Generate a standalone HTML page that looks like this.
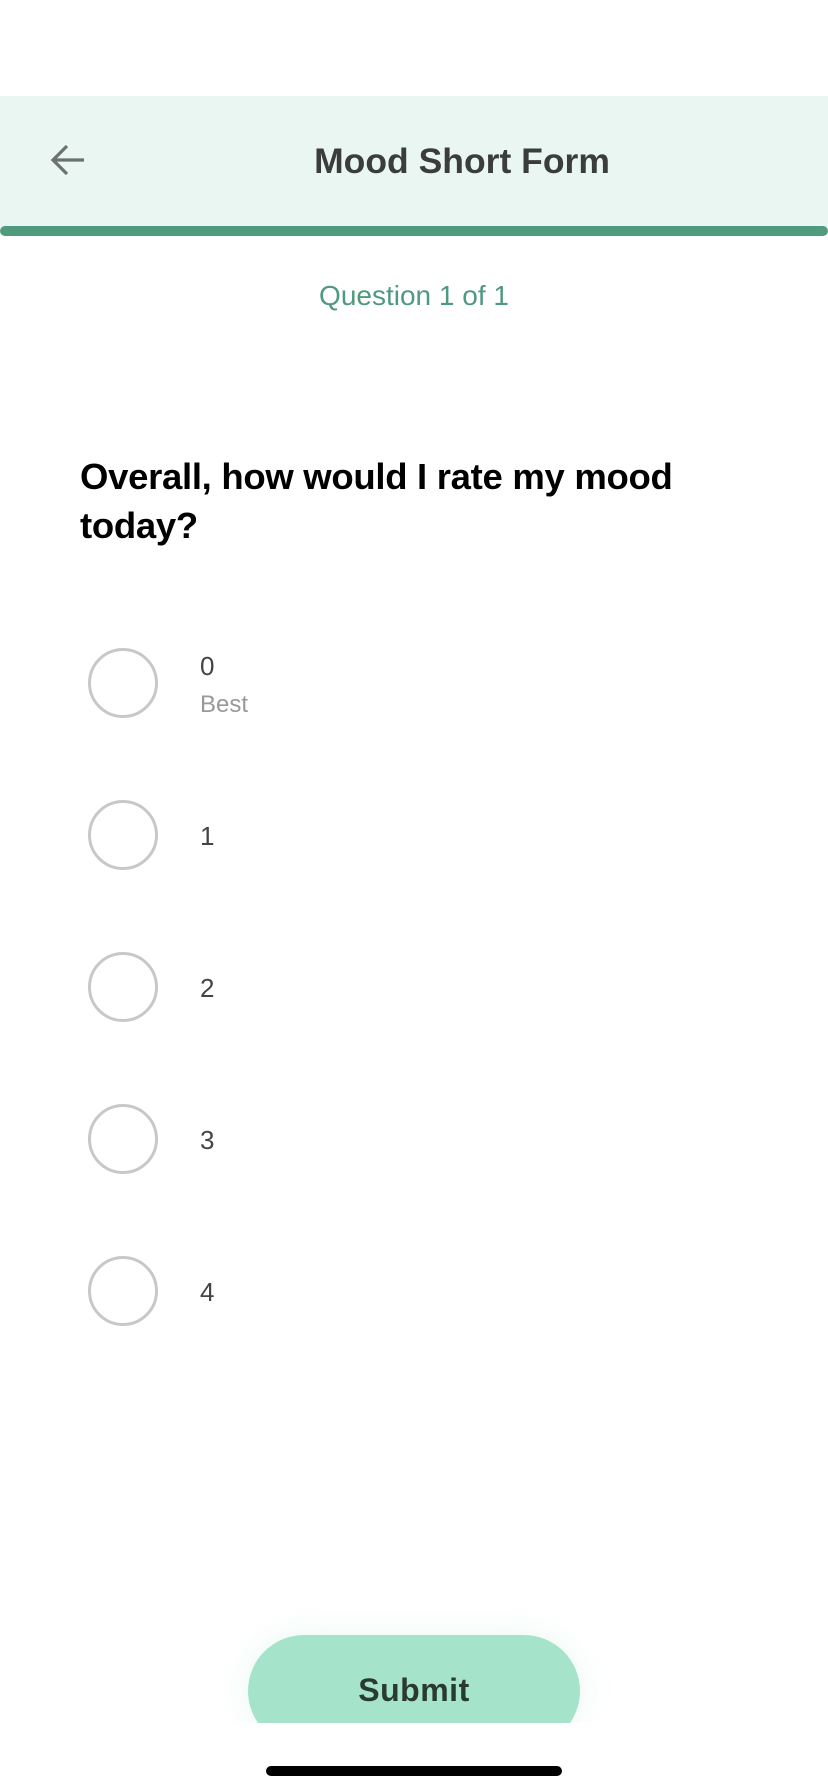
<!DOCTYPE html>
<html><head><meta charset="utf-8"><style>
*{margin:0;padding:0;box-sizing:border-box}
body{width:828px;height:1792px;background:#fff;position:relative;overflow:hidden;font-family:"Liberation Sans",Arial,sans-serif}
.hdr{position:absolute;left:0;top:96px;width:828px;height:132px;background:#e9f6f1}
.bar{position:absolute;left:0;top:226px;width:828px;height:10px;background:#509b7e;border-radius:5px}
.title{position:absolute;left:0;width:828px;top:140px;text-align:center;font-weight:bold;font-size:35.5px;color:#3a3d3b;padding-left:96px;line-height:42px}
.q{position:absolute;left:0;width:828px;top:279px;text-align:center;font-size:28px;color:#4f9a7e;line-height:34px;padding-left:0}
.qt{position:absolute;left:80px;top:452px;width:660px;font-weight:bold;font-size:36.5px;line-height:49px;color:#000;letter-spacing:-0.3px}
.r{position:absolute;left:88px;width:70px;height:70px;border:3.5px solid #c8c8c8;border-radius:50%}
.n{position:absolute;left:200px;font-size:26px;color:#444;line-height:30px}
.b{position:absolute;left:200px;font-size:24px;color:#999;line-height:26px}
.btnwrap{position:absolute;left:0;top:1600px;width:828px;height:123px;overflow:hidden}
.btn{position:absolute;left:248px;top:35px;width:332px;height:112px;border-radius:56px;background:#a6e3cb;box-shadow:0 0 30px rgba(166,227,203,0.25)}
.btn span{position:absolute;left:0;width:332px;top:37px;text-align:center;font-weight:bold;font-size:32px;color:#2a3a33;letter-spacing:0.5px}
.home{position:absolute;left:266px;top:1766px;width:296px;height:10px;border-radius:5px;background:#000}
</style></head><body>
<div class="hdr"></div>
<svg style="position:absolute;left:48px;top:142px" width="40" height="36" viewBox="0 0 40 36"><path d="M36 18H6M19 4L5 18L19 32" fill="none" stroke="#6b716e" stroke-width="3.2"/></svg>
<div class="title">Mood Short Form</div>
<div class="bar"></div>
<div class="q">Question 1 of 1</div>
<div class="qt">Overall, how would I rate my mood today?</div>
<div class="r" style="top:648px"></div>
<div class="n" style="top:651px">0</div>
<div class="b" style="top:692px">Best</div>
<div class="r" style="top:800px"></div>
<div class="n" style="top:821px">1</div>
<div class="r" style="top:952px"></div>
<div class="n" style="top:973px">2</div>
<div class="r" style="top:1104px"></div>
<div class="n" style="top:1125px">3</div>
<div class="r" style="top:1256px"></div>
<div class="n" style="top:1277px">4</div>
<div class="btnwrap"><div class="btn"><span>Submit</span></div></div>
<div class="home"></div>
</body></html>
